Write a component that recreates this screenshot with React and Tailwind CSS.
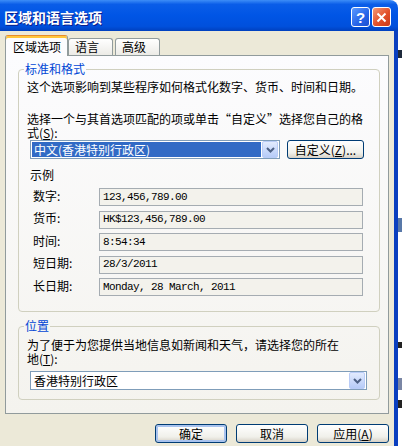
import React from 'react';

const samples = [
  { label: '数字:', value: '123,456,789.00' },
  { label: '货币:', value: 'HK$123,456,789.00' },
  { label: '时间:', value: '8:54:34' },
  { label: '短日期:', value: '28/3/2011' },
  { label: '长日期:', value: 'Monday, 28 March, 2011' },
];

const ComboArrow = () => (
  <div className="w-[16px] h-[17px] rounded-[2px] border border-[#B9CCF7] bg-[linear-gradient(to_bottom,#E2EBFE,#B6CBF8)] flex items-center justify-center">
    <svg width="9" height="6" viewBox="0 0 9 6">
      <path d="M1 1 L4.5 4.5 L8 1" stroke="#4D6185" strokeWidth="2" fill="none" />
    </svg>
  </div>
);

const XpButton = ({ children, focused, className = '' }) => (
  <button
    className={
      'h-[19px] rounded-[3px] border border-[#003C74] bg-[linear-gradient(to_bottom,#FFFFFF,#F0F0EA_70%,#D6D0C5)] text-[12px] leading-[14px] text-black flex items-center justify-center ' +
      (focused ? 'shadow-[inset_0_0_0_2px_#A9C3EE] ' : '') +
      className
    }
  >
    {children}
  </button>
);

export default function App() {
  return (
    <div className="w-[402px] h-[446px] flex overflow-hidden bg-white font-['Noto_Sans_CJK_SC','Noto_Sans',sans-serif] text-black">
      {/* dialog window */}
      <div className="w-[398px] h-full flex flex-col">
        {/* title bar */}
        <div className="h-[31px] shrink-0 rounded-tr-[8px] bg-[linear-gradient(to_bottom,#3D8DF7_0%,#0A5DE8_14%,#0055E5_50%,#0050DC_85%,#0040BE_100%)] flex items-center pl-[4px] pr-[7px]">
          <span className="text-white font-bold text-[14px] leading-[16px] mt-[2px] [text-shadow:1px_1px_0_#0A1E8C]">
            区域和语言选项
          </span>
          <div className="ml-auto flex gap-[2px] mt-[3px]">
            <div className="w-[19px] h-[20px] rounded-[3px] border border-white bg-[linear-gradient(135deg,#5C9BFF,#2663E8_60%,#1C4FD0)] flex items-center justify-center text-white font-bold text-[15px] leading-none font-['Liberation_Sans',sans-serif]">
              ?
            </div>
            <div className="w-[19px] h-[20px] rounded-[3px] border border-white bg-[linear-gradient(135deg,#F29A78,#E2502A_55%,#C8391A)] flex items-center justify-center">
              <svg width="11" height="11" viewBox="0 0 11 11">
                <path d="M1.5 1.5 L9.5 9.5 M9.5 1.5 L1.5 9.5" stroke="#FFFFFF" strokeWidth="2" />
              </svg>
            </div>
          </div>
        </div>

        {/* body */}
        <div className="flex-1 bg-[#ECE9D8] border-r-4 border-[#0A3FBF] flex flex-col px-[5px] pt-[4px]">
          {/* tabs */}
          <div className="flex items-end h-[21px] -mb-px relative z-10">
            <div className="w-[63px] h-[21px] bg-[#FCFCFE] border-x border-t border-[#919B9C] border-t-[#E68B2C] rounded-t-[3px] shadow-[inset_0_2px_0_#FFC73C] text-[12px] leading-[14px] pl-[7px] pt-[4px]">
              区域选项
            </div>
            <div className="w-[45px] h-[17px] mb-px bg-[linear-gradient(to_bottom,#FFFFFF,#ECEBE6)] border-x border-t border-[#919B9C] rounded-t-[3px] text-[12px] leading-[14px] pl-[6px] pt-[1px]">
              语言
            </div>
            <div className="w-[45px] h-[17px] mb-px ml-[2px] bg-[linear-gradient(to_bottom,#FFFFFF,#ECEBE6)] border-x border-t border-[#919B9C] rounded-t-[3px] text-[12px] leading-[14px] pl-[6px] pt-[1px]">
              高级
            </div>
          </div>

          {/* tab panel */}
          <div className="h-[359px] border border-[#919B9C] bg-[linear-gradient(to_bottom,#FCFCFE,#F4F3EE)] pl-[12px] pr-[8px] pt-[6px] flex flex-col">
            {/* 标准和格式 */}
            <fieldset className="border border-[#D0D0BF] rounded-[4px] pl-[8px] pb-[15px]">
              <legend className="-ml-[3px] px-[1px] text-[12px] leading-[14px] text-[#0046D5]">标准和格式</legend>
              <p className="mt-[4px] text-[12px] leading-[14px] whitespace-nowrap">
                这个选项影响到某些程序如何格式化数字、货币、时间和日期。
              </p>
              <p className="mt-[18px] text-[12px] leading-[14px] whitespace-nowrap">
                选择一个与其首选项匹配的项或单击“自定义”选择您自己的格
                <br />
                式(<span className="underline">S</span>):
              </p>
              <div className="ml-[3px] flex items-center">
                <div className="w-[250px] h-[19px] border border-[#7F9DB9] bg-white flex items-center pl-[1px] pr-[1px]">
                  <div className="flex-1 h-[15px] bg-[#316AC5] text-white text-[12px] leading-[15px] pl-[2px] mr-[1px]">
                    中文(香港特别行政区)
                  </div>
                  <ComboArrow />
                </div>
                <XpButton className="ml-[7px] w-[77px] h-[19px]">
                  自定义(<span className="underline">Z</span>)...
                </XpButton>
              </div>

              <p className="ml-[3px] mt-[9px] text-[12px] leading-[14px]">示例</p>
              <div className="mt-[6px] flex flex-col gap-[4.5px]">
                {samples.map((s) => (
                  <div key={s.label} className="flex items-center">
                    <span className="w-[72px] pl-[6px] text-[12px] leading-[14px] -mt-[3px]">{s.label}</span>
                    <div className="w-[264px] h-[18px] border border-[#A5ACB2] bg-[#F3F2EC] flex items-center pl-[3px] font-['Liberation_Mono',monospace] text-[11px] tracking-[-0.6px] whitespace-nowrap">
                      {s.value}
                    </div>
                  </div>
                ))}
              </div>
            </fieldset>

            {/* 位置 */}
            <fieldset className="mt-[7px] border border-[#D0D0BF] rounded-[4px] pl-[8px] pb-[9px]">
              <legend className="-ml-[3px] px-[1px] text-[12px] leading-[14px] text-[#0046D5]">位置</legend>
              <p className="mt-[5px] text-[12px] leading-[14px] whitespace-nowrap">
                为了便于为您提供当地信息如新闻和天气，请选择您的所在
                <br />
                地(<span className="underline">T</span>):
              </p>
              <div className="mt-[5px] ml-[3px] w-[337px] h-[19px] border border-[#7F9DB9] bg-white flex items-center pl-[3px] pr-[1px]">
                <span className="flex-1 text-[12px] leading-[15px]">香港特别行政区</span>
                <ComboArrow />
              </div>
            </fieldset>
          </div>

          {/* dialog buttons */}
          <div className="mt-[10px] flex justify-end gap-[9px]">
            <XpButton focused className="w-[72px]">确定</XpButton>
            <XpButton className="w-[72px]">取消</XpButton>
            <XpButton className="w-[72px]">
              应用(<span className="underline">A</span>)
            </XpButton>
          </div>
        </div>
      </div>

      {/* neighbouring desktop content */}
      <div className="w-[4px] h-full bg-white flex flex-col">
        <div className="mt-[50px] h-[8px] bg-[#1E2A3C]" />
        <div className="mt-[160px] h-[14px] bg-[#5878A8]" />
        <div className="mt-[110px] h-[6px] bg-[#222222]" />
        <div className="mt-[30px] h-[12px] bg-[#7A86A4]" />
        <div className="mt-[10px] h-[8px] bg-[#222222]" />
      </div>
    </div>
  );
}
